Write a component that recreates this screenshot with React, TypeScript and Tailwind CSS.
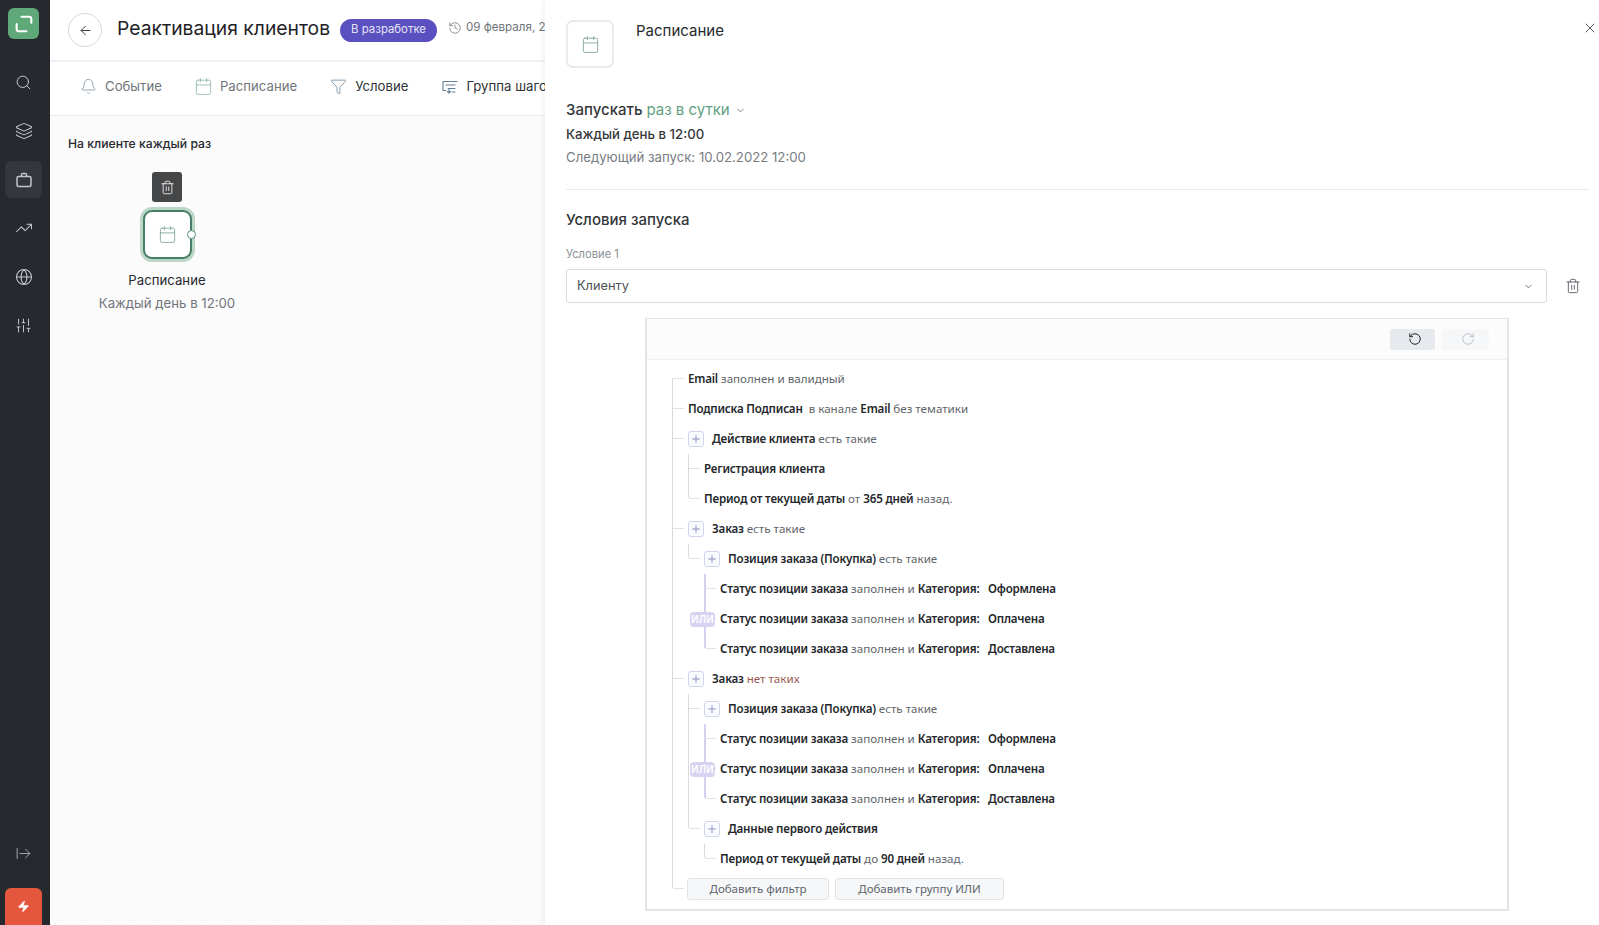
import { ReactNode } from "react";
import {
  ArrowLeft,
  ArrowRightFromLine,
  Bell,
  Calendar,
  ChevronDown,
  Funnel,
  Globe,
  History,
  Layers,
  Plus,
  RotateCcw,
  RotateCw,
  Search,
  SlidersVertical,
  Trash2,
  TrendingUp,
  X,
  Zap,
} from "lucide-react";

const inter = "font-['Inter','Noto_Sans',sans-serif]";

const SideItem = ({ children, active }: { children: ReactNode; active?: boolean }) => (
  <div
    className={`flex h-[37px] w-[37px] items-center justify-center rounded-md text-[#c3c7cc] ${
      active ? "bg-[#33373d]" : ""
    }`}
  >
    {children}
  </div>
);

const Sidebar = () => (
  <aside className="flex h-full w-[50px] shrink-0 flex-col items-center bg-[#26292e] pr-[3px]">
    <div className="mt-[8px] flex h-[31px] w-[31px] items-center justify-center rounded-md bg-[#5fa877]">
      <svg width="22" height="22" viewBox="0 0 18 18" fill="none" stroke="#fff" strokeWidth="1.7" strokeLinecap="round">
        <path d="M7 3h6a2 2 0 0 1 2 2v3" />
        <path d="M3 9v4a2 2 0 0 0 2 2h6" />
      </svg>
    </div>
    <div className="mt-[25px] flex flex-col gap-[11.5px]">
      <SideItem><Search size={17} strokeWidth={1.4} /></SideItem>
      <SideItem><Layers size={18} strokeWidth={1.4} /></SideItem>
      <SideItem active>
        <svg width="18" height="18" viewBox="0 0 18 18" fill="none" stroke="currentColor" strokeWidth="1.5" strokeLinejoin="round">
          <rect x="2" y="5.5" width="14" height="10" rx="1.5" />
          <path d="M6.5 5.5V3.5a1 1 0 0 1 1-1h3a1 1 0 0 1 1 1v2" />
        </svg>
      </SideItem>
      <SideItem><TrendingUp size={18} strokeWidth={1.4} /></SideItem>
      <SideItem><Globe size={18} strokeWidth={1.4} /></SideItem>
      <SideItem><SlidersVertical size={17} strokeWidth={1.4} /></SideItem>
    </div>
    <div className="mt-auto mb-[26px] text-[#a4a8ad]">
      <ArrowRightFromLine size={17} strokeWidth={1.4} />
    </div>
    <div className="flex h-[37px] w-[37px] items-center justify-center rounded-t-md bg-[#e4573d] text-white">
      <Zap size={13} fill="#fff" strokeWidth={1} />
    </div>
  </aside>
);

const Tab = ({ icon, label, dark }: { icon: ReactNode; label: string; dark?: boolean }) => (
  <div className={`flex shrink-0 items-center gap-[9px] ${dark ? "text-[#2f3338]" : "text-[#6f757b]"}`}>
    <span className="flex w-[15px] justify-center">{icon}</span>
    <span className="text-[13.2px] whitespace-nowrap">{label}</span>
  </div>
);

const StepsIcon = () => (
  <svg width="16" height="16" viewBox="0 0 16 16" fill="none" stroke="#5f7f9a" strokeWidth="1.1" strokeLinecap="round" className="shrink-0">
    <path d="M1 2.5h14M1 2.5v9h3M4 6h9M6 9.5h7M10 13h3M7 10v4M5.5 12.5 7 14l1.5-1.5" />
  </svg>
);

const LeftPane = () => (
  <main className="flex h-full w-[495px] shrink-0 flex-col overflow-hidden">
    <header className="flex h-[62px] shrink-0 items-center border-b-2 border-[#eff0f1] pl-[18px]">
      <div className="flex h-[34px] w-[34px] shrink-0 items-center justify-center rounded-full border border-[#d5d7da] text-[#3a3e43]">
        <ArrowLeft size={15} strokeWidth={1.6} />
      </div>
      <h1 className="mb-[2px] ml-[15px] shrink-0 text-[19.3px] leading-none font-normal whitespace-nowrap text-[#1f2226]">
        Реактивация клиентов
      </h1>
      <span className="ml-[10px] flex h-[23px] w-[97px] shrink-0 items-center justify-center rounded-full bg-[#5b50bf] text-[11.4px] text-[#e5e3f6]">
        В разработке
      </span>
      <div className="mb-[4px] ml-[11px] flex shrink-0 items-center gap-[4px] text-[11.6px] whitespace-nowrap text-[#6f757b]">
        <History size={14} strokeWidth={1.3} />
        <span>09 февраля, 2022</span>
      </div>
    </header>
    <nav className="flex h-[54px] shrink-0 items-center gap-[34px] border-b border-[#e9eaec] pb-[3px] pl-[31px]">
      <Tab icon={<Bell size={17} strokeWidth={1.1} className="shrink-0 text-[#7d8f9e]" />} label="Событие" />
      <Tab icon={<Calendar size={19} strokeWidth={1} className="shrink-0 text-[#8cb39c]" />} label="Расписание" />
      <Tab icon={<Funnel size={17} strokeWidth={1.1} className="shrink-0 text-[#5f7f9a]" />} label="Условие" dark />
      <Tab icon={<StepsIcon />} label="Группа шагов" dark />
    </nav>
    <section className="flex-1 bg-[#fbfbfb] bg-[radial-gradient(#f0f0f0_1px,transparent_1px)] bg-[size:24px_24px] pt-[19px] pl-[18px]">
      <div className="text-[12.2px] leading-[18px] font-medium text-[#26292e]">На клиенте каждый раз</div>
      <div className="mt-[19px] ml-[34px] flex w-[130px] flex-col items-center">
        <div className="flex h-[30px] w-[30px] items-center justify-center rounded-[3px] bg-[#454648] text-white">
          <Trash2 size={15} strokeWidth={1.3} />
        </div>
        <div className="relative mt-[8px] flex h-[49px] w-[49px] items-center justify-center rounded-[9px] border-2 border-[#457f66] bg-white shadow-[0_0_0_3px_#bcd6c8]">
          <Calendar size={19} strokeWidth={1.1} className="text-[#7fa791]" />
          <span className="absolute top-[18px] right-[-6px] h-[9px] w-[9px] rounded-full border-[1.5px] border-[#5b8f76] bg-white" />
        </div>
        <div className="mt-[11px] text-[13.2px] leading-[20px] text-[#26292e]">Расписание</div>
        <div className="mt-[3px] text-[13.2px] leading-[20px] whitespace-nowrap text-[#6f757b]">Каждый день в 12:00</div>
      </div>
    </section>
  </main>
);

interface TreeNodeProps {
  first?: boolean;
  last?: boolean;
  purple?: boolean;
  children: ReactNode;
}

// connector column stretches with the node so nested rows keep the parent's line going
const TreeNode = ({ first, last, purple, children }: TreeNodeProps) => {
  const line = purple ? "border-[#d5cff0] border-l-2" : "border-[#d8dadd] border-l";
  return (
    <div className="flex">
      <div className="flex w-[12px] shrink-0 flex-col">
        <div
          className={`h-[15px] shrink-0 border-b border-b-[#e1e3e5] ${first ? "" : line} ${
            last ? "rounded-bl-[3px]" : ""
          }`}
        />
        {!last && <div className={`flex-1 ${line}`} />}
      </div>
      <div className="ml-[4px] min-w-0 flex-1">{children}</div>
    </div>
  );
};

const Row = ({ plus, children }: { plus?: boolean; children: ReactNode }) => (
  <div className="relative flex h-[30px] items-center whitespace-nowrap">
    {plus && (
      <span className="mr-[8px] flex h-[16px] w-[16px] shrink-0 items-center justify-center rounded-[3px] border border-[#cfd6ea] bg-[#fafbfe] text-[#6f82b8]">
        <Plus size={12} strokeWidth={1.6} />
      </span>
    )}
    <span>{children}</span>
  </div>
);

const B = ({ children }: { children: ReactNode }) => (
  <b className="font-semibold tracking-[-0.2px] text-[#24272b]">{children}</b>
);

const OrBadge = () => (
  <span className="absolute top-[8px] left-[-30px] flex h-[15px] w-[25px] items-center justify-center rounded-[4px] bg-[#d9d3f2] text-[10px] font-semibold text-white">
    ИЛИ
  </span>
);

const StatusRow = ({ value }: { value: string }) => (
  <Row>
    <B>Статус позиции заказа</B> заполнен и <B>Категория:&nbsp; <span className="ml-[3px]">{value}</span></B>
  </Row>
);

const StatusGroup = () => (
  <>
    <TreeNode purple>
      <StatusRow value="Оформлена" />
    </TreeNode>
    <TreeNode purple>
      <div className="relative">
        <OrBadge />
        <StatusRow value="Оплачена" />
      </div>
    </TreeNode>
    <TreeNode purple last>
      <StatusRow value="Доставлена" />
    </TreeNode>
  </>
);

const ConditionTree = () => (
  <div className="mt-[15px] ml-[79px] h-[593px] w-[864px] overflow-hidden border-2 border-t border-[#e3e4e6] bg-white font-['Noto_Sans',sans-serif] text-[11.6px] text-[#5f656b]">
    <div className="flex h-[41px] items-center justify-end gap-[7px] border-b border-[#eeeff0] bg-[#fcfcfc] pr-[18px]">
      <div className="flex h-[21px] w-[45px] items-center justify-center rounded-[3px] bg-[#e6e9ed] pl-[5px] text-[#24272b]">
        <RotateCcw size={14} strokeWidth={1.7} />
      </div>
      <div className="flex h-[21px] w-[47px] items-center justify-center rounded-[3px] bg-[#f6f7f8] pl-[5px] text-[#b5b8bb]">
        <RotateCw size={14} strokeWidth={1.4} />
      </div>
    </div>
    <div className="pt-[4px] pl-[25px]">
      <TreeNode first>
        <Row><B>Email</B> заполнен и валидный</Row>
      </TreeNode>
      <TreeNode>
        <Row><B>Подписка Подписан</B>&nbsp; в канале <B>Email</B> без тематики</Row>
      </TreeNode>
      <TreeNode>
        <Row plus><B>Действие клиента</B> есть такие</Row>
        <TreeNode>
          <Row><B>Регистрация клиента</B></Row>
        </TreeNode>
        <TreeNode last>
          <Row><B>Период от текущей даты</B> от <B>365 дней</B> назад.</Row>
        </TreeNode>
      </TreeNode>
      <TreeNode>
        <Row plus><B>Заказ</B> есть такие</Row>
        <TreeNode last>
          <Row plus><B>Позиция заказа (Покупка)</B> есть такие</Row>
          <StatusGroup />
        </TreeNode>
      </TreeNode>
      <TreeNode>
        <Row plus><B>Заказ</B> <span className="text-[#9a5a4f]">нет таких</span></Row>
        <TreeNode>
          <Row plus><B>Позиция заказа (Покупка)</B> есть такие</Row>
          <StatusGroup />
        </TreeNode>
        <TreeNode last>
          <Row plus><B>Данные первого действия</B></Row>
          <TreeNode last>
            <Row><B>Период от текущей даты</B> до <B>90 дней</B> назад.</Row>
          </TreeNode>
        </TreeNode>
      </TreeNode>
      <TreeNode last>
        <div className="ml-[-1px] flex h-[30px] items-center gap-[6px] text-[11.5px] text-[#5f666d]">
          <button className="h-[22px] w-[142px] rounded-[3px] border border-[#e0e4e8] bg-[#f5f7f9]">Добавить фильтр</button>
          <button className="h-[22px] w-[169px] rounded-[3px] border border-[#e0e4e8] bg-[#f5f7f9]">Добавить группу ИЛИ</button>
        </div>
      </TreeNode>
    </div>
  </div>
);

const RightPane = () => (
  <section className="relative z-10 flex h-full min-w-0 flex-1 flex-col bg-white pt-[20px] pr-[10px] pl-[21px] shadow-[-2px_0_6px_rgba(0,0,0,0.05)]">
    <div className="flex">
      <div className="flex h-[48px] w-[48px] items-center justify-center rounded-[7px] border-2 border-[#e8eaeb] text-[#7fa791]">
        <Calendar size={19} strokeWidth={1.1} />
      </div>
      <div className="ml-[22px] text-[15px] leading-[22px] text-[#26292e]">Расписание</div>
      <X size={16} strokeWidth={1.4} className="mr-[-9px] ml-auto text-[#55595e]" />
    </div>
    <div className="mt-[31px] flex items-center text-[15px] leading-[22px] font-medium text-[#34373b]">
      Запускать
      <span className="ml-[4px] font-normal text-[#5f9f7f]">раз в сутки</span>
      <ChevronDown size={11} className="ml-[5px] text-[#777b80]" />
    </div>
    <div className="mt-[3px] text-[13.2px] leading-[20px] font-medium text-[#34373b]">Каждый день в 12:00</div>
    <div className="mt-[3px] text-[13.2px] leading-[20px] text-[#787d83]">Следующий запуск: 10.02.2022 12:00</div>
    <div className="mt-[22px] h-px bg-[#e9eaeb]" />
    <div className="mt-[19px] text-[15px] leading-[22px] font-medium text-[#33363a]">Условия запуска</div>
    <div className="mt-[15px] text-[11.2px] leading-[16px] text-[#8a8f94]">Условие 1</div>
    <div className="mt-[7px] flex items-center">
      <div className="flex h-[34px] w-[981px] items-center justify-between rounded-[3px] border-[1.5px] border-[#d9dbdd] pr-[12px] pl-[10px] text-[12.8px] text-[#4d5156]">
        Клиенту
        <ChevronDown size={11} className="text-[#6b6f74]" />
      </div>
      <Trash2 size={16} strokeWidth={1.3} className="ml-[18px] text-[#4f5358]" />
    </div>
    <ConditionTree />
  </section>
);

export default function App() {
  return (
    <div className={`flex h-screen w-full overflow-hidden bg-white ${inter}`}>
      <Sidebar />
      <LeftPane />
      <RightPane />
    </div>
  );
}
